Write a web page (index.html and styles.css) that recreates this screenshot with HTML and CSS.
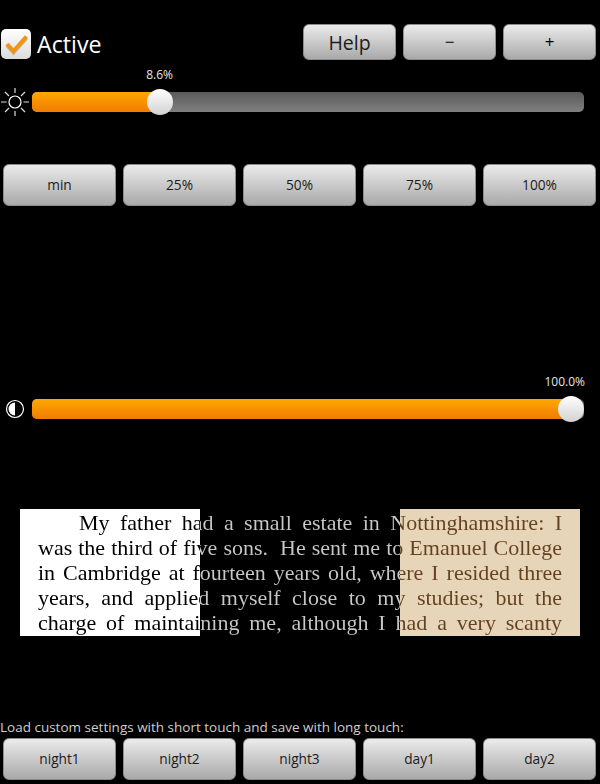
FILE: index.html
```html
<!DOCTYPE html>
<html lang="en">
<head>
<meta charset="utf-8">
<title>Screen filter</title>
<link rel="stylesheet" href="styles.css">
</head>
<body>
<main class="screen">
  <header class="top">
    <label class="active">
      <span class="check">
        <svg viewBox="0 0 30 30" width="30" height="30"><path d="M6 15 L12.5 22 L25.5 7.5" fill="none" stroke="#bdb8b0" stroke-width="4" transform="translate(0 1.5)"/><path d="M6 15 L12.5 22 L25.5 7.5" fill="none" stroke="#f29412" stroke-width="4"/></svg>
      </span>
      Active
    </label>
    <div class="top-buttons">
      <button class="btn btn-help">Help</button>
      <button class="btn btn-small">−</button>
      <button class="btn btn-small">+</button>
    </div>
  </header>

  <section class="slider slider-one">
    <svg class="slider-icon" viewBox="0 0 30 30" width="30" height="30">
      <circle cx="15" cy="15" r="6" fill="none" stroke="#fff" stroke-width="1.2"/>
      <path d="M15 1V6M15 24V29M1 15H6.5M23.5 15H29M5 5L9 9M21 21L25 25M25 5L21 9M9 21L5 25" stroke="#ddd" stroke-width="1.2" fill="none"/>
    </svg>
    <div class="track">
      <div class="fill" style="width:128px"></div>
      <div class="thumb" style="left:128px"><span class="value">8.6%</span></div>
    </div>
  </section>

  <div class="btn-row row-presets">
    <button class="btn">min</button>
    <button class="btn">25%</button>
    <button class="btn">50%</button>
    <button class="btn">75%</button>
    <button class="btn">100%</button>
  </div>

  <section class="slider slider-two">
    <svg class="slider-icon" viewBox="0 0 30 30" width="30" height="30">
      <circle cx="15" cy="15" r="8.5" fill="#000" stroke="#fff" stroke-width="1.2"/>
      <path d="M15 8.5A6.5 6.5 0 0 0 15 21.5Z" fill="#fff"/>
    </svg>
    <div class="track">
      <div class="fill" style="width:539px"></div>
      <div class="thumb" style="left:539px"><span class="value">100.0%</span></div>
    </div>
  </section>

  <section class="preview">
    <p class="book">My father had a small estate in Nottinghamshire: I was the third of five sons.&nbsp; He sent me to Emanuel College in Cambridge at fourteen years old, where I resided three years, and applied myself close to my studies; but the charge of maintaining me, although I had a very scanty</p>
  </section>

  <p class="caption">Load custom settings with short touch and save with long touch:</p>
  <div class="btn-row">
    <button class="btn">night1</button>
    <button class="btn">night2</button>
    <button class="btn">night3</button>
    <button class="btn">day1</button>
    <button class="btn">day2</button>
  </div>
</main>
</body>
</html>
```
FILE: styles.css
```css
* { box-sizing: border-box; }
html, body { margin: 0; padding: 0; background: #000; }
body { font-family: "Open Sans", "Noto Sans", sans-serif; color: #fff; }
.screen { width: 600px; height: 784px; overflow: hidden; display: flex; flex-direction: column; }

.top { display: flex; justify-content: space-between; padding: 24px 4px 0 1px; height: 60px; }
.active { display: flex; align-items: center; gap: 6px; font-size: 23.2px; margin-top: 5px; height: 30px; }
.check { width: 30px; height: 30px; border-radius: 5px; background: linear-gradient(#fff, #dcdcdc); display: block; }
.check svg { display: block; }
.top-buttons { display: flex; gap: 7px; }

.btn {
  display: block; margin: 0; padding: 0 0 1px;
  border: 1px solid #8c8c8c; border-radius: 6px;
  background: linear-gradient(#ebebeb, #a9a9a9);
  font-family: "Open Sans", "Noto Sans", sans-serif; font-size: 13.7px; color: #1c1c1c;
}
.btn-help { width: 93px; height: 36px; padding: 1px 0 0; font-size: 19.5px; }
.btn-small { width: 93px; height: 36px; font-size: 17px; color: #000; }

.slider { display: flex; align-items: center; padding-right: 16px; height: 20px; }
.slider-one { margin-top: 32px; }
.slider-two { margin-top: 193px; }
.slider-icon { width: 30px; height: 30px; margin-right: 2px; flex: none; }
.track { position: relative; flex: 1; height: 20px; border-radius: 5px; background: linear-gradient(#5a5a5a, #808080); }
.fill { height: 20px; border-radius: 5px 0 0 5px; background: linear-gradient(#ffa800, #f07c00); }
.thumb { position: absolute; top: -3px; width: 26px; height: 26px; margin-left: -13px; border-radius: 50%; background: linear-gradient(#fff, #d2d2d2); }
.value { position: absolute; bottom: 33px; right: 0; font-size: 12px; line-height: 14px; color: #e6e6e6; white-space: nowrap; }
.slider-two .value { right: -1px; }

.btn-row { display: flex; gap: 7px; padding: 0 4px 0 3px; }
.btn-row .btn { width: 113px; height: 42px; }
.row-presets { margin-top: 52px; }

.preview {
  margin: 90px 20px 0; height: 127px; padding: 1px 0 0;
  background: linear-gradient(to right, #fff 180px, #000 180px, #000 380px, #e6d5b8 380px);
}
.book {
  margin: 0; padding: 0 18px;
  font-family: "Liberation Serif", serif; font-size: 22px; line-height: 25px;
  text-align: justify; text-align-last: justify; text-indent: 41px;
  background: linear-gradient(to right, #000 180px, #c8c8c8 180px, #c8c8c8 380px, #64421f 380px);
  -webkit-background-clip: text; background-clip: text; color: transparent;
}

.caption { margin: 82px 0 2px; height: 18px; font-size: 13.5px; line-height: 18px; color: #cfcfcf; white-space: nowrap; }
```
